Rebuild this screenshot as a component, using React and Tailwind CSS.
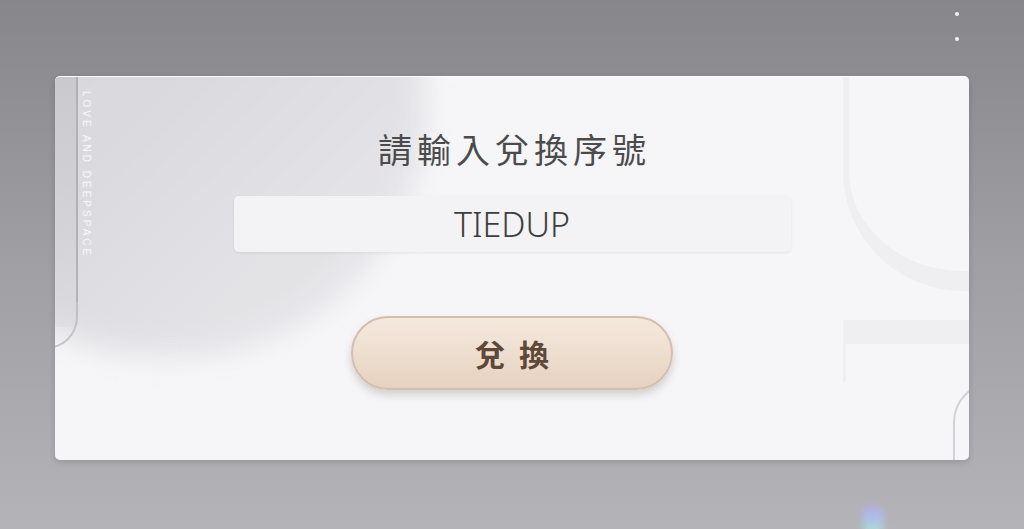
import React from "react";

export default function App() {
  return (
    <div
      className="relative w-[1024px] h-[529px] overflow-hidden bg-gradient-to-b from-[#87868b] via-[#a09fa4] to-[#b4b3b8]"
      style={{ fontFamily: '"Noto Sans", "Noto Sans CJK TC", sans-serif' }}
    >
      {/* top-right dots */}
      <div className="absolute left-[955px] top-[12px] w-[4px] h-[4px] rounded-full bg-white/90" />
      <div className="absolute left-[955px] top-[37px] w-[4px] h-[4px] rounded-full bg-white/90" />
      {/* glare */}
      <div className="absolute left-[862px] top-[505px] w-[22px] h-[30px] rounded-full bg-gradient-to-b from-[#b9a8f2] via-[#a8c6f0] to-[#b6f0d0] blur-[3px] opacity-80" />

      <div className="pt-[76px] pl-[55px]">
        <div className="relative w-[914px] h-[384px] rounded-[5px] bg-[#f6f6f8] overflow-hidden shadow-[0_2px_6px_rgba(0,0,0,0.15)] border-t border-white">
          {/* top-left gray blob */}
          <div className="absolute -left-[140px] -top-[215px] w-[510px] h-[495px] rounded-full bg-gradient-to-br from-[#cdccd0] via-[#d9d8dc] to-[#e9e8ec] blur-[14px] opacity-90" />
          {/* left strip */}
          <div className="absolute left-0 top-0 w-[22px] h-[250px] bg-gradient-to-b from-[#c4c3c7]/70 to-[#d4d3d7]/30" />
          <div className="absolute left-[21px] top-0 w-[2px] h-[225px] bg-[#a9a8ad]/80" />
          <div className="absolute -left-[12px] top-[200px] w-[35px] h-[72px] rounded-br-[32px] border-r-2 border-b-2 border-[#b4b3b8]/70" />
          <div
            className="absolute left-[28px] top-[14px] text-[10px] tracking-[3px] text-white/80 whitespace-nowrap origin-top-left rotate-90 translate-x-[11px]"
            style={{ fontFamily: '"Liberation Sans", sans-serif' }}
          >
            LOVE AND DEEPSPACE
          </div>

          {/* right decorations */}
          <div className="absolute left-[788px] top-[-10px] w-[190px] h-[224px] rounded-bl-[120px] border-l-[6px] border-b-[20px] border-[#efeff1]" />
          <div className="absolute left-[788px] top-[243px] w-[130px] h-[24px] bg-[#efeff1]" />
          <div className="absolute left-[788px] top-[243px] w-[3px] h-[62px] bg-[#efeff1]" />
          <div className="absolute left-[898px] top-[305px] w-[40px] h-[100px] rounded-tl-[40px] border-l-2 border-t-2 border-[#d2d1d5]" />

          {/* content */}
          <div className="relative flex flex-col items-center">
            <div className="mt-[52px] h-[40px] flex items-center text-[34px] leading-none tracking-[5px] text-[#4b4b4d] pl-[5px]"
              style={{ fontFamily: '"Noto Sans CJK TC", sans-serif' }}>
              請輸入兌換序號
            </div>
            <div className="mt-[27px] w-[557px] h-[56px] rounded-[5px] bg-[#f3f3f5] shadow-[0_1px_3px_rgba(0,0,0,0.08)] flex items-center justify-center">
              <span className="text-[34px] font-light leading-none text-[#3e3e40]"
                style={{ fontFamily: '"Noto Sans", sans-serif' }}>
                TIEDUP
              </span>
            </div>
            <div className="mt-[64px] w-[322px] h-[74px] rounded-full border-2 border-[#d6beae] bg-gradient-to-b from-[#f4e9de] via-[#eedecf] to-[#e6d2c0] shadow-[0_5px_8px_rgba(90,70,60,0.22)] flex items-center justify-center">
              <span className="text-[30px] font-bold leading-none tracking-[14px] pl-[14px] text-[#5e4838]"
                style={{ fontFamily: '"Noto Sans CJK TC", serif' }}>
                兌換
              </span>
            </div>
          </div>
        </div>
      </div>
    </div>
  );
}
